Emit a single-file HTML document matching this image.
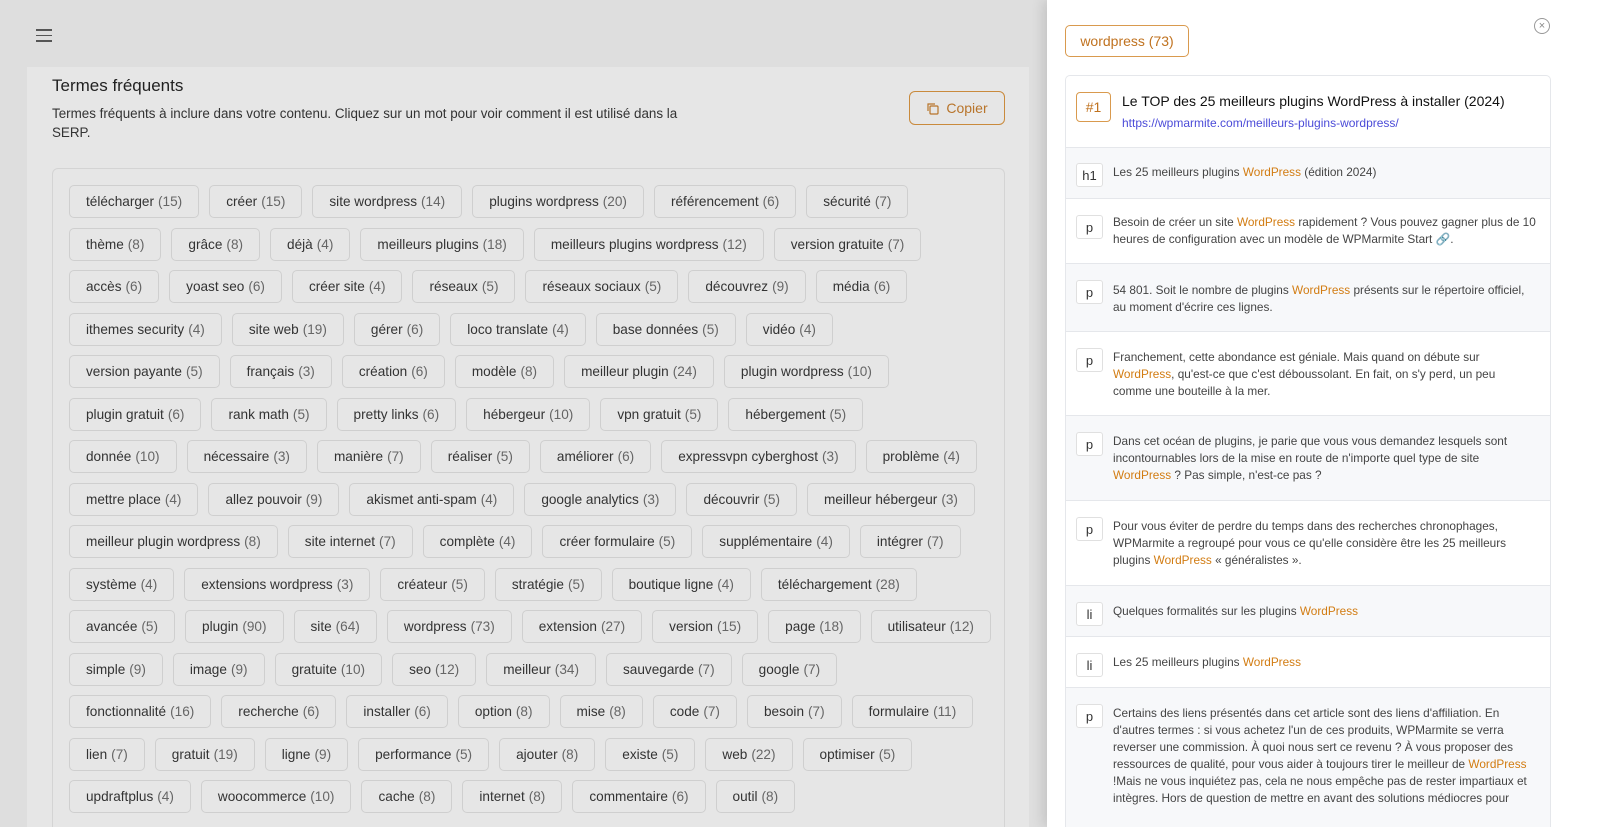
<!DOCTYPE html>
<html><head><meta charset="utf-8"><style>
*{box-sizing:border-box;margin:0;padding:0}
html,body{width:1600px;height:827px;overflow:hidden}
body{background:#dedede;font-family:"Liberation Sans",sans-serif;color:#333;position:relative}
.ham{position:absolute;left:36px;top:29px;width:16px}
.ham i{display:block;height:1.5px;background:#555;margin-bottom:4px}
.card{position:absolute;left:27px;top:67px;width:1002px;height:760px;background:#e6e6e6;overflow:hidden}
.card h2{position:absolute;left:25px;top:9px;font-size:17px;font-weight:normal;color:#222}
.card .desc{position:absolute;left:25px;top:37px;width:660px;font-size:13.4px;line-height:19px;color:#333}
.copy{position:absolute;left:882px;top:24px;width:96px;height:34px;border:1px solid #c98a3c;border-radius:6px;color:#b8742a;font-size:14px;display:flex;align-items:center;justify-content:center;gap:7px}
.box{position:absolute;left:25px;top:101px;width:953px;height:659px;border:1px solid #d4d4d4;border-bottom:none;border-radius:6px 6px 0 0;padding:16px 0 0 16px;overflow:hidden}
.row{display:flex;gap:10px;margin-bottom:9.5px;white-space:nowrap}
.t{height:33px;border:1px solid #cfcfcf;border-radius:5px;padding:0 16px;display:flex;align-items:center;font-size:13.6px;color:#333;background:#e6e6e6}
.t span{color:#666;margin-left:4px}
.panel{position:absolute;left:1047px;top:0;width:553px;height:827px;background:#fff;box-shadow:-4px 0 12px rgba(0,0,0,.12);overflow:hidden}
.kw{position:absolute;left:18px;top:25px;width:124px;height:32px;border:1px solid #d99a4e;border-radius:5px;color:#c0721f;font-size:14px;display:flex;align-items:center;justify-content:center}
.close{position:absolute;left:487px;top:18px;width:16px;height:16px;border:1px solid #999;border-radius:50%;color:#888;font-size:11px;line-height:14px;text-align:center}
.res{position:absolute;left:18px;top:75px;width:486px;height:752px;border:1px solid #e5e7eb;border-bottom:none;border-radius:5px 5px 0 0;overflow:hidden}
.head{height:72px;position:relative;border-bottom:1px solid #e5e7eb}
.num{position:absolute;left:10px;top:16px;width:35px;height:30px;border:1px solid #d99a4e;border-radius:4px;color:#c0721f;font-size:14px;display:flex;align-items:center;justify-content:center}
.title{position:absolute;left:56px;top:17px;font-size:14px;color:#111}
.url{position:absolute;left:56px;top:40px;font-size:12px;color:#4b4bd8}
.it{position:relative;border-bottom:1px solid #e5e7eb;padding:16px 14px 0 47px;font-size:11.8px;line-height:17px;color:#444;overflow:hidden}
.it.g{background:#f7f8fa}
.it b{font-weight:normal;color:#d27c12}
.lab{position:absolute;left:10px;top:16px;width:27px;height:24px;border:1px solid #e0e0e0;border-radius:3px;background:#fff;font-size:13px;color:#333;display:flex;align-items:center;justify-content:center}
</style></head><body>
<div class="ham"><i></i><i></i><i></i></div>
<div class="card">
<h2>Termes fréquents</h2>
<div class="desc">Termes fréquents à inclure dans votre contenu. Cliquez sur un mot pour voir comment il est utilisé dans la SERP.</div>
<div class="copy"><svg width="13" height="13" viewBox="0 0 13 13" fill="none" stroke="#b8742a" stroke-width="1.2"><rect x="4" y="4" width="8" height="8" rx="1"/><path d="M2 9V2h7"/></svg>Copier</div>
<div class="box">
<div class="row"><div class="t">télécharger<span>(15)</span></div><div class="t">créer<span>(15)</span></div><div class="t">site wordpress<span>(14)</span></div><div class="t">plugins wordpress<span>(20)</span></div><div class="t">référencement<span>(6)</span></div><div class="t">sécurité<span>(7)</span></div></div>
<div class="row"><div class="t">thème<span>(8)</span></div><div class="t">grâce<span>(8)</span></div><div class="t">déjà<span>(4)</span></div><div class="t">meilleurs plugins<span>(18)</span></div><div class="t">meilleurs plugins wordpress<span>(12)</span></div><div class="t">version gratuite<span>(7)</span></div></div>
<div class="row"><div class="t">accès<span>(6)</span></div><div class="t">yoast seo<span>(6)</span></div><div class="t">créer site<span>(4)</span></div><div class="t">réseaux<span>(5)</span></div><div class="t">réseaux sociaux<span>(5)</span></div><div class="t">découvrez<span>(9)</span></div><div class="t">média<span>(6)</span></div></div>
<div class="row"><div class="t">ithemes security<span>(4)</span></div><div class="t">site web<span>(19)</span></div><div class="t">gérer<span>(6)</span></div><div class="t">loco translate<span>(4)</span></div><div class="t">base données<span>(5)</span></div><div class="t">vidéo<span>(4)</span></div></div>
<div class="row"><div class="t">version payante<span>(5)</span></div><div class="t">français<span>(3)</span></div><div class="t">création<span>(6)</span></div><div class="t">modèle<span>(8)</span></div><div class="t">meilleur plugin<span>(24)</span></div><div class="t">plugin wordpress<span>(10)</span></div></div>
<div class="row"><div class="t">plugin gratuit<span>(6)</span></div><div class="t">rank math<span>(5)</span></div><div class="t">pretty links<span>(6)</span></div><div class="t">hébergeur<span>(10)</span></div><div class="t">vpn gratuit<span>(5)</span></div><div class="t">hébergement<span>(5)</span></div></div>
<div class="row"><div class="t">donnée<span>(10)</span></div><div class="t">nécessaire<span>(3)</span></div><div class="t">manière<span>(7)</span></div><div class="t">réaliser<span>(5)</span></div><div class="t">améliorer<span>(6)</span></div><div class="t">expressvpn cyberghost<span>(3)</span></div><div class="t">problème<span>(4)</span></div></div>
<div class="row"><div class="t">mettre place<span>(4)</span></div><div class="t">allez pouvoir<span>(9)</span></div><div class="t">akismet anti-spam<span>(4)</span></div><div class="t">google analytics<span>(3)</span></div><div class="t">découvrir<span>(5)</span></div><div class="t">meilleur hébergeur<span>(3)</span></div></div>
<div class="row"><div class="t">meilleur plugin wordpress<span>(8)</span></div><div class="t">site internet<span>(7)</span></div><div class="t">complète<span>(4)</span></div><div class="t">créer formulaire<span>(5)</span></div><div class="t">supplémentaire<span>(4)</span></div><div class="t">intégrer<span>(7)</span></div></div>
<div class="row"><div class="t">système<span>(4)</span></div><div class="t">extensions wordpress<span>(3)</span></div><div class="t">créateur<span>(5)</span></div><div class="t">stratégie<span>(5)</span></div><div class="t">boutique ligne<span>(4)</span></div><div class="t">téléchargement<span>(28)</span></div></div>
<div class="row"><div class="t">avancée<span>(5)</span></div><div class="t">plugin<span>(90)</span></div><div class="t">site<span>(64)</span></div><div class="t">wordpress<span>(73)</span></div><div class="t">extension<span>(27)</span></div><div class="t">version<span>(15)</span></div><div class="t">page<span>(18)</span></div><div class="t">utilisateur<span>(12)</span></div></div>
<div class="row"><div class="t">simple<span>(9)</span></div><div class="t">image<span>(9)</span></div><div class="t">gratuite<span>(10)</span></div><div class="t">seo<span>(12)</span></div><div class="t">meilleur<span>(34)</span></div><div class="t">sauvegarde<span>(7)</span></div><div class="t">google<span>(7)</span></div></div>
<div class="row"><div class="t">fonctionnalité<span>(16)</span></div><div class="t">recherche<span>(6)</span></div><div class="t">installer<span>(6)</span></div><div class="t">option<span>(8)</span></div><div class="t">mise<span>(8)</span></div><div class="t">code<span>(7)</span></div><div class="t">besoin<span>(7)</span></div><div class="t">formulaire<span>(11)</span></div></div>
<div class="row"><div class="t">lien<span>(7)</span></div><div class="t">gratuit<span>(19)</span></div><div class="t">ligne<span>(9)</span></div><div class="t">performance<span>(5)</span></div><div class="t">ajouter<span>(8)</span></div><div class="t">existe<span>(5)</span></div><div class="t">web<span>(22)</span></div><div class="t">optimiser<span>(5)</span></div></div>
<div class="row"><div class="t">updraftplus<span>(4)</span></div><div class="t">woocommerce<span>(10)</span></div><div class="t">cache<span>(8)</span></div><div class="t">internet<span>(8)</span></div><div class="t">commentaire<span>(6)</span></div><div class="t">outil<span>(8)</span></div></div>
</div>
</div>
<div class="panel">
<div class="kw">wordpress (73)</div>
<div class="close">×</div>
<div class="res">
<div class="head"><div class="num">#1</div><div class="title">Le TOP des 25 meilleurs plugins WordPress à installer (2024)</div><div class="url">https://wpmarmite.com/meilleurs-plugins-wordpress/</div></div>
<div class="it g" style="height:51px;padding-top:16px"><div class="lab" style="top:15px">h1</div>Les 25 meilleurs plugins <b>WordPress</b> (édition 2024)</div>
<div class="it" style="height:65px;padding-top:15px"><div class="lab">p</div>Besoin de créer un site <b>WordPress</b> rapidement ? Vous pouvez gagner plus de 10 heures de configuration avec un modèle de WPMarmite Start 🔗.</div>
<div class="it g" style="height:68px;padding-top:18px;padding-right:20px"><div class="lab">p</div>54 801. Soit le nombre de plugins <b>WordPress</b> présents sur le répertoire officiel, au moment d'écrire ces lignes.</div>
<div class="it" style="height:84px;padding-top:17px;padding-right:40px"><div class="lab">p</div>Franchement, cette abondance est géniale. Mais quand on débute sur <b>WordPress</b>, qu'est-ce que c'est déboussolant. En fait, on s'y perd, un peu comme une bouteille à la mer.</div>
<div class="it g" style="height:85px;padding-top:17px;padding-right:40px"><div class="lab">p</div>Dans cet océan de plugins, je parie que vous vous demandez lesquels sont incontournables lors de la mise en route de n'importe quel type de site <b>WordPress</b> ? Pas simple, n'est-ce pas ?</div>
<div class="it" style="height:85px;padding-top:17px"><div class="lab">p</div>Pour vous éviter de perdre du temps dans des recherches chronophages, WPMarmite a regroupé pour vous ce qu'elle considère être les 25 meilleurs plugins <b>WordPress</b> « généralistes ».</div>
<div class="it g" style="height:51px;padding-top:17px"><div class="lab">li</div>Quelques formalités sur les plugins <b>WordPress</b></div>
<div class="it" style="height:51px;padding-top:17px"><div class="lab">li</div>Les 25 meilleurs plugins <b>WordPress</b></div>
<div class="it g" style="height:140px;padding-top:17px;border-bottom:none"><div class="lab">p</div>Certains des liens présentés dans cet article sont des liens d'affiliation. En d'autres termes : si vous achetez l'un de ces produits, WPMarmite se verra reverser une commission. À quoi nous sert ce revenu ? À vous proposer des ressources de qualité, pour vous aider à toujours tirer le meilleur de <b>WordPress</b> !Mais ne vous inquiétez pas, cela ne nous empêche pas de rester impartiaux et intègres. Hors de question de mettre en avant des solutions médiocres pour</div>
</div>
</div>
</body></html>
